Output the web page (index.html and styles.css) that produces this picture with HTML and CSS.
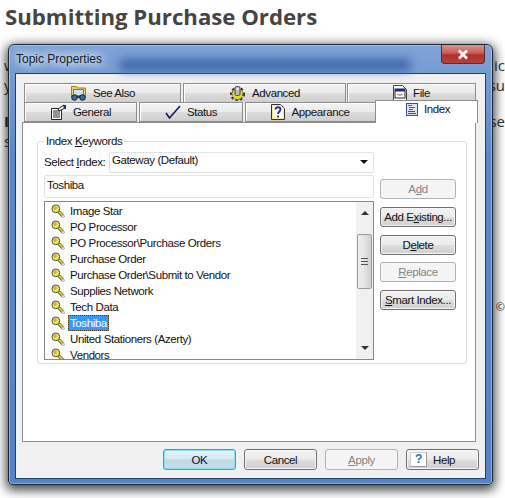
FILE: index.html
```html
<!DOCTYPE html>
<html lang="en">
<head>
  <meta charset="UTF-8">
  <meta name="viewport" content="width=device-width, initial-scale=1.0">
  <title>Submitting Purchase Orders</title>
  <link rel="stylesheet" href="styles.css">
</head>
<body>
  <svg class="defs" width="0" height="0">
    <symbol id="key" viewBox="0 0 16 16">
      <path d="M8 8l5.500 5.500" stroke="#444" stroke-width="3.600" fill="none"/>
      <path d="M8 8l5.500 5.500" stroke="#f2e23c" stroke-width="1.800" fill="none"/>
      <circle cx="5.500" cy="5.500" r="4.500" fill="#f2e23c" stroke="#444"/>
      <circle cx="4.500" cy="4.500" r="1.300" fill="#fff" stroke="#555" stroke-width=".7"/>
      <path d="M14.500 12l1 3-3 .5" stroke="#aaa" fill="none"/>
    </symbol>
  </svg>

  <header class="page-head">
    <h1>Submitting Purchase Orders</h1>
  </header>

  <!-- article text mostly hidden behind the dialog -->
  <main class="article">
    <p>w<span>ic</span></p>
    <p>y<span>su</span></p>
    <p class="bold">I<span class="plain">se</span></p>
    <p>s</p>
    <p class="lone"><span>©</span></p>
  </main>

  <div class="window">
    <div class="titlebar">
      <div class="title-blur"></div>
      <span class="title">Topic Properties</span>
      <div class="close">
        <svg width="14" height="11" viewBox="0 0 14 11"><path d="M3 1.500l8 8M11 1.500l-8 8" stroke="#fff" stroke-width="2.600"/></svg>
      </div>
    </div>

    <div class="client">
      <div class="tabs">
        <div class="tab-row row-back">
          <div class="tab">
            <svg width="17" height="16" viewBox="0 0 17 16">
              <path d="M1.500 12V1.500h5l1 1.500h8v9z" fill="#f0d070" stroke="#a08020"/>
              <rect x="3.500" y="4.500" width="10" height="6" fill="#cfe0f5" stroke="#5a7db0"/>
              <circle cx="4.500" cy="12.500" r="2.800" fill="#3a6a9a" stroke="#123"/>
              <circle cx="12.500" cy="12.500" r="2.800" fill="#3a6a9a" stroke="#123"/>
              <path d="M7 12h3" stroke="#123" stroke-width="1.500"/>
            </svg>
            See Also
          </div>
          <div class="tab">
            <svg width="17" height="15" viewBox="0 0 17 15">
              <circle cx="8.500" cy="8" r="6" fill="none" stroke="#333" stroke-width="3" stroke-dasharray="2.200 2.200"/>
              <circle cx="8.500" cy="8" r="5.500" fill="#e8d820" stroke="#554" stroke-dasharray="2 1"/>
              <rect x="6" y=".5" width="5" height="9" rx="1.500" fill="#bbb" stroke="#444"/>
              <circle cx="8.500" cy="3" r="1" fill="#fff"/>
            </svg>
            Advanced
          </div>
          <div class="tab">
            <svg width="14" height="16" viewBox="0 0 14 16">
              <path d="M.5.5h9l4 4v11H.5z" fill="#fff" stroke="#444"/>
              <rect x="2" y="4" width="10" height="9" fill="#fff" stroke="#223"/>
              <rect x="2" y="4" width="10" height="2.500" fill="#1c2c8c"/>
              <path d="M4 9.500l1.500-1v2zM10 9.500l-1.500-1v2z" fill="#c22"/>
              <path d="M6 10h2" stroke="#26a" />
            </svg>
            File
          </div>
        </div>
        <div class="tab-row row-front">
          <div class="tab">
            <svg width="17" height="16" viewBox="0 0 17 16">
              <path d="M1.500 4.500h10v11h-10z" fill="#fff" stroke="#222"/>
              <path d="M3 7h7M3 9h7M3 11h7M3 13h7" stroke="#222"/>
              <path d="M8 5l6-4 1 3-6 3z" fill="#fff" stroke="#222"/>
              <path d="M13 1h3v4h-2z" fill="#1c2c8c"/>
            </svg>
            General
          </div>
          <div class="tab">
            <svg width="16" height="14" viewBox="0 0 16 14"><path d="M1 8l3.500 5L15 1" fill="none" stroke="#14186e" stroke-width="1.600"/></svg>
            Status
          </div>
          <div class="tab">
            <svg width="14" height="16" viewBox="0 0 14 16">
              <path d="M.5.5h9l4 4v11H.5z" fill="#fff" stroke="#333"/>
              <rect x="1.500" y="1.500" width="11" height="13" fill="none" stroke="#ecd820" stroke-dasharray="1 1"/>
              <path d="M4.500 5.500C4.500 2.500 9.500 2.500 9.500 5.500 9.500 7.500 7 7.500 7 10M7 11.500v2" fill="none" stroke="#1c2c9c" stroke-width="1.800"/>
            </svg>
            Appearance
          </div>
          <div class="tab tab-active">
            <svg width="12" height="13" viewBox="0 0 12 13">
              <rect x=".5" y=".5" width="11" height="12" fill="#dfe4f2" stroke="#3a4aa0"/>
              <path d="M2 2.500h4M3 4.500h6M3 6.500h4" stroke="#c8303a"/>
              <path d="M2 8.500h7M2 10.500h8" stroke="#3a4aa0"/>
            </svg>
            Index
          </div>
        </div>
      </div>

      <section class="panel">
        <div class="group">
          <span class="group-label">Index <u>K</u>eywords</span>
          <div class="group-main">
            <div class="select-row">
              <label class="select-label">Select <u>I</u>ndex:</label>
              <div class="select">
                <span>Gateway (Default)</span>
                <i class="caret"></i>
              </div>
            </div>
            <div class="text-field">Toshiba</div>
            <div class="listbox">
              <ul class="keywords">
                <li><svg class="key"><use href="#key"/></svg><span>Image Star</span></li>
                <li><svg class="key"><use href="#key"/></svg><span>PO Processor</span></li>
                <li><svg class="key"><use href="#key"/></svg><span>PO Processor\Purchase Orders</span></li>
                <li><svg class="key"><use href="#key"/></svg><span>Purchase Order</span></li>
                <li><svg class="key"><use href="#key"/></svg><span>Purchase Order\Submit to Vendor</span></li>
                <li><svg class="key"><use href="#key"/></svg><span>Supplies Network</span></li>
                <li><svg class="key"><use href="#key"/></svg><span>Tech Data</span></li>
                <li class="selected"><svg class="key"><use href="#key"/></svg><span>Toshiba</span></li>
                <li><svg class="key"><use href="#key"/></svg><span>United Stationers (Azerty)</span></li>
                <li><svg class="key"><use href="#key"/></svg><span>Vendors</span></li>
              </ul>
              <div class="scrollbar">
                <i class="arrow-up"></i>
                <div class="thumb"><b></b></div>
                <i class="arrow-down"></i>
              </div>
            </div>
          </div>
          <div class="side-buttons">
            <button class="btn" disabled>A<u>d</u>d</button>
            <button class="btn">Add E<u>x</u>isting...</button>
            <button class="btn">D<u>e</u>lete</button>
            <button class="btn" disabled><u>R</u>eplace</button>
            <button class="btn"><u>S</u>mart Index...</button>
          </div>
        </div>
      </section>

      <footer class="actions">
        <button class="btn btn-wide btn-default">OK</button>
        <button class="btn btn-wide">Cancel</button>
        <button class="btn btn-wide" disabled><u>A</u>pply</button>
        <button class="btn btn-wide btn-help">
          <span class="help-mark">?</span>
          Help
        </button>
      </footer>
    </div>
  </div>
</body>
</html>
```

FILE: styles.css
```css
* {
  box-sizing: border-box;
}

html,
body {
  height: 100%;
}

body {
  margin: 0;
  background: #fff;
  overflow: hidden;
  font-family: 'Liberation Sans', sans-serif;
  font-size: 11.500px;
  letter-spacing: -0.4px;
  color: #111;
}

.defs {
  display: block;
}

.page-head h1 {
  margin: 0;
  padding: 0 0 0 5px;
  font-family: 'Open Sans', sans-serif;
  font-size: 22.200px;
  line-height: 34px;
  font-weight: 700;
  letter-spacing: 0;
  color: #444;
}

/* Page text behind the dialog */
.article {
  padding: 21px 0 0 4px;
  font-family: 'Open Sans', sans-serif;
  font-size: 15px;
  letter-spacing: 0;
  color: #333;
}

.article p {
  display: flex;
  justify-content: space-between;
  margin: 0;
  height: 20px;
  line-height: 20px;
}

.article .bold {
  margin-top: 16px;
  font-weight: 700;
}

.article .plain {
  font-weight: 400;
}

.article .lone {
  margin-top: 146px;
  justify-content: flex-end;
  font-size: 11px;
}

/* Dialog */
.window {
  position: absolute;
  left: 8px;
  top: 44px;
  width: 485px;
  height: 441px;
  padding: 0 6px 6px;
  border: 1px solid #1c2733;
  border-radius: 6px 6px 4px 4px;
  background: linear-gradient(#7fa3d6, #5c88c9 25%, #5582c8);
  box-shadow: 0 3px 11px 2px rgba(0, 0, 0, 0.75), inset 0 0 0 1px rgba(255, 255, 255, 0.35);
}

.titlebar {
  position: relative;
  height: 28px;
  display: flex;
  align-items: center;
}

.title-blur {
  position: absolute;
  left: 105px;
  top: 14px;
  width: 290px;
  height: 12px;
  background: #3d68a8;
  filter: blur(5px);
}

.title {
  position: relative;
  margin-left: 1px;
  font-size: 12px;
  letter-spacing: 0;
  color: #1a1a22;
  text-shadow: 0 0 8px #e4eefa, 0 0 8px #e4eefa, 0 0 12px #e4eefa;
}

.close {
  position: absolute;
  right: 1px;
  top: 0;
  width: 44px;
  height: 19px;
  display: flex;
  align-items: center;
  justify-content: center;
  background: linear-gradient(#d9948e, #c55f58 45%, #b0302a 55%, #b8413a);
  border: 1px solid #5c2a2a;
  border-top: 0;
  border-radius: 0 0 4px 4px;
}

.client {
  height: 406px;
  padding: 9px 9px 0 6px;
  background: #f0f0f0;
  border: 1px solid #24405f;
}

/* Tabs */
.tab-row {
  display: flex;
  margin-left: 2px;
}

.row-back {
  height: 19px;
  gap: 2px;
}

.row-front {
  height: 20px;
  gap: 2px;
}

.tab {
  display: flex;
  flex: none;
  align-items: center;
  justify-content: center;
  gap: 6px;
  border: 1px solid #8c8c8c;
  background: linear-gradient(#f2f2f2, #ebebeb 48%, #dcdcdc 52%, #cfcfcf);
  box-shadow: inset 1px 1px 0 #fff;
  white-space: nowrap;
}

.row-back .tab {
  border-bottom: 0;
}

.row-back .tab:nth-child(1) {
  width: 157px;
}

.row-back .tab:nth-child(2) {
  width: 163px;
}

.row-back .tab:nth-child(3) {
  width: 129px;
  margin-left: -1px;
}

.row-front .tab:nth-child(1) {
  width: 113px;
}

.row-front .tab:nth-child(2) {
  width: 104px;
}

.row-front .tab:nth-child(3) {
  width: 131px;
  margin-right: -3px;
}

.tab-active {
  position: relative;
  z-index: 1;
  align-items: flex-start;
  width: 103px;
  height: 23px;
  margin-top: -2px;
  padding: 2px 0 0 3px;
  background: #fff;
  border-bottom: 0;
  box-shadow: none;
}

/* Panel */
.panel {
  height: 320px;
  padding: 18px 11px 0 14px;
  background: #fff;
  border: 1px solid #8c8c8c;
}

.group {
  position: relative;
  display: flex;
  gap: 6px;
  width: 430px;
  height: 223px;
  padding: 9px 0 0 6px;
  border: 1px solid #d5dfe5;
  border-radius: 3px;
}

.group-label {
  position: absolute;
  left: 6px;
  top: -8px;
  padding: 0 2px;
  background: #fff;
  line-height: 14px;
}

.group-main {
  width: 330px;
}

.select-row {
  display: flex;
  align-items: center;
  gap: 3px;
  height: 22px;
}

.select-label {
  width: 62px;
  white-space: nowrap;
}

.select {
  flex: 1;
  display: flex;
  align-items: center;
  justify-content: space-between;
  height: 21px;
  padding: 0 5px 4px 2px;
  border: 1px solid #dde3ea;
  border-radius: 2px;
}

.caret {
  margin-top: 3px;
  border: 4px solid transparent;
  border-top: 4px solid #111;
  border-bottom: 0;
}

.text-field {
  height: 23px;
  margin-top: 2px;
  padding: 3px 0 0 2px;
  border: 1px solid #dde3ea;
  border-radius: 2px;
}

.listbox {
  display: flex;
  height: 159px;
  margin-top: 3px;
  border: 1px solid #828790;
  overflow: hidden;
}

.keywords {
  flex: 1;
  margin: 0;
  padding: 1px 0 0 6px;
  list-style: none;
}

.keywords li {
  display: flex;
  align-items: center;
  gap: 3px;
  height: 16px;
}

.keywords li span {
  padding: 0 1px;
  line-height: 14px;
  border: 1px solid transparent;
}

.keywords .selected span {
  background: #3399ff;
  color: #fff;
  border: 1px dotted #5a3a10;
}

.key {
  width: 14px;
  height: 14px;
  flex: none;
}

.scrollbar {
  display: flex;
  flex-direction: column;
  align-items: center;
  width: 17px;
  padding-top: 9px;
  background: #f0f0f0;
}

.arrow-up,
.arrow-down {
  flex: none;
  border: 4px solid transparent;
  border-top: 0;
  border-bottom: 4px solid #333;
}

.arrow-down {
  margin-top: auto;
  margin-bottom: 9px;
  border-bottom: 0;
  border-top: 4px solid #333;
}

.thumb {
  display: flex;
  align-items: center;
  justify-content: center;
  flex: none;
  width: 15px;
  height: 55px;
  margin-top: 19px;
  background: linear-gradient(90deg, #f0f0f0, #e4e4e4 50%, #cfcfcf);
  border: 1px solid #9a9a9a;
  border-radius: 2px;
}

.thumb b {
  width: 7px;
  height: 7px;
  border-top: 1px solid #555;
  border-bottom: 1px solid #555;
  background: linear-gradient(#555, #555) center / 100% 1px no-repeat;
}

.side-buttons {
  display: flex;
  flex-direction: column;
  width: 76px;
  padding-top: 28px;
}

.side-buttons .btn {
  margin-bottom: 8px;
}

.side-buttons .btn:nth-child(3) {
  margin-bottom: 7px;
}

/* Buttons */
.btn {
  height: 20px;
  padding: 0;
  font-family: 'Liberation Sans', sans-serif;
  font-size: 11.500px;
  letter-spacing: -0.4px;
  color: #111;
  border: 1px solid #707070;
  border-radius: 3px;
  background: linear-gradient(#f2f2f2, #ebebeb 48%, #dddddd 52%, #cfcfcf);
  box-shadow: inset 0 0 0 1px #f6f6f6;
  white-space: nowrap;
}

.btn:disabled {
  color: #848484;
  background: #f4f4f4;
  border-color: #adb2b5;
}

.actions {
  display: flex;
  justify-content: flex-end;
  gap: 8px;
  margin-right: -3px;
  padding: 7px 0 0;
}

.btn-wide {
  width: 73px;
  height: 21px;
}

.btn-default {
  border-color: #3c9ed0;
  background: linear-gradient(#e6f3f9, #d5e8f2 48%, #bcd8e6 52%, #c6dfea);
  box-shadow: inset 0 0 0 1px #8fdcf5;
}

.btn-help {
  display: flex;
  align-items: center;
  gap: 6px;
  padding: 0 0 0 3px;
}

.help-mark {
  width: 17px;
  height: 15px;
  background: #fff;
  border: 1px solid #d0d0d0;
  border-right-color: #999;
  border-bottom-color: #999;
  color: #1a6ecc;
  font-weight: 700;
  font-size: 12px;
  line-height: 13px;
  text-align: center;
}
```
